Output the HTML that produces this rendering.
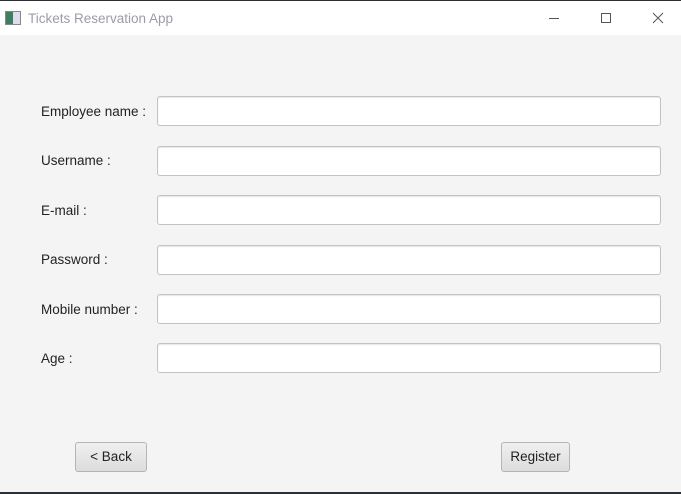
<!DOCTYPE html>
<html><head><style>
*{margin:0;padding:0;box-sizing:border-box}
body{width:681px;height:494px;background:#f4f4f4;font-family:"Liberation Sans",sans-serif;position:relative;overflow:hidden}
.top{position:absolute;left:0;top:0;width:681px;height:1px;background:#2b2f36}
.bar{position:absolute;left:0;top:1px;width:681px;height:34px;background:#fff}
.title{position:absolute;left:28px;top:10px;font-size:13.5px;color:#a09aa6}
.ico{position:absolute;left:5px;top:10px;width:16px;height:14px;border:1px solid #888;background:linear-gradient(90deg,#3c7e5e 50%,#dde 50%)}
.lbl{position:absolute;left:41px;font-size:13.5px;color:#222}
.f{position:absolute;left:157px;width:504px;height:30px;background:#fff;border:1px solid #c3c3c3;border-radius:3px;box-shadow:inset 0 1px 1px #e6e6e6}
.btn{position:absolute;top:442px;height:30px;border:1px solid #b5b5b5;border-radius:3px;background:linear-gradient(#f0f0f0,#dcdcdc);font-size:13.5px;color:#222;text-align:center;line-height:28px}
.bot{position:absolute;left:0;top:492px;width:681px;height:2px;background:#2b2f36}
</style></head><body>
<div class="top"></div>
<div class="bar"><div class="ico"></div><div class="title">Tickets Reservation App</div>
<svg style="position:absolute;left:540px;top:9px" width="130" height="18"><line x1="9" y1="8.5" x2="19" y2="8.5" stroke="#555"/><rect x="61.5" y="3.5" width="9" height="9" fill="none" stroke="#555"/><path d="M113 3 L123 13 M123 3 L113 13" stroke="#555"/></svg></div>
<div class="lbl" style="top:104px">Employee name :</div><div class="f" style="top:96px"></div>
<div class="lbl" style="top:153px">Username :</div><div class="f" style="top:146px"></div>
<div class="lbl" style="top:203px">E-mail :</div><div class="f" style="top:195px"></div>
<div class="lbl" style="top:252px">Password :</div><div class="f" style="top:245px"></div>
<div class="lbl" style="top:302px">Mobile number :</div><div class="f" style="top:294px"></div>
<div class="lbl" style="top:351px">Age :</div><div class="f" style="top:343px"></div>
<div class="btn" style="left:75px;width:72px">&lt; Back</div>
<div class="btn" style="left:501px;width:69px">Register</div>
<div class="bot"></div>
</body></html>
